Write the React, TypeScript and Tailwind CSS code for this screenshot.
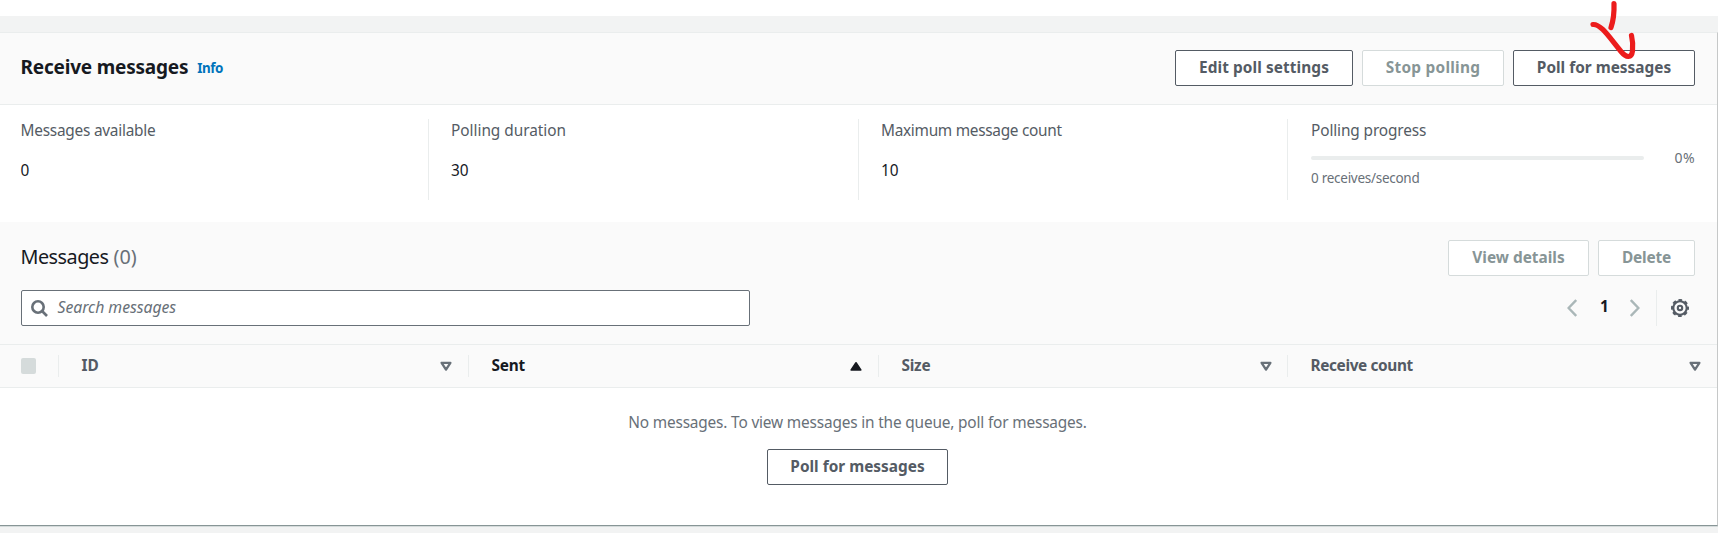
import type { ReactNode } from 'react';

function Button({ children, disabled = false, className = '' }: { children: ReactNode; disabled?: boolean; className?: string }) {
  return (
    <button
      className={`flex h-9 shrink-0 items-center justify-center whitespace-nowrap rounded-[2px] border bg-white pb-px text-[15.4px] font-bold ${
        disabled ? 'border-[#d5dbdb] text-[#879596]' : 'border-[#545b64] text-[#545b64]'
      } ${className}`}
    >
      {children}
    </button>
  );
}

function Stat({ label, value, tracking, className = '' }: { label: string; value: string; tracking: string; className?: string }) {
  return (
    <div className={`h-[81px] shrink-0 border-r border-[#eaeded] ${className}`}>
      <div className={`h-[23px] leading-[23px] text-[#545b64] ${tracking}`}>{label}</div>
      <div className="mt-[17px] h-[23px] leading-[23px] text-[#16191f]">{value}</div>
    </div>
  );
}

function SortDown() {
  return (
    <svg width="12" height="11" viewBox="0 0 12 11" fill="none" stroke="#687078" strokeWidth="2.3" strokeLinejoin="round">
      <path d="M1.6 1.8h8.8L6 8.6z" />
    </svg>
  );
}

function SortUp() {
  return (
    <svg width="12" height="11" viewBox="0 0 12 11" fill="#16191f" stroke="#16191f" strokeWidth="1.6" strokeLinejoin="round">
      <path d="M1.2 9h9.6L6 1.8z" />
    </svg>
  );
}

function HeaderCell({ label, icon, className = '' }: { label: string; icon: ReactNode; className?: string }) {
  return (
    <div className={`flex h-[22px] shrink-0 items-center justify-between border-l border-[#eaeded] pl-[22.5px] font-bold ${className}`}>
      <span className="pb-px">{label}</span>
      {icon}
    </div>
  );
}

function Gear() {
  return (
    <svg width="18" height="18" viewBox="0 0 18 18" fill="none" stroke="#545b64">
      <circle cx="9" cy="9" r="6.7" strokeWidth="2.1" />
      <circle cx="9" cy="9" r="8" strokeWidth="2" strokeDasharray="3.6 2.683" strokeDashoffset="1.8" />
      <circle cx="9" cy="9" r="2.2" strokeWidth="2.1" />
    </svg>
  );
}

export default function App() {
  return (
    <div className="relative h-[533px] w-[1718px] overflow-hidden bg-[#f2f3f3] pt-4 font-['Noto_Sans',sans-serif] text-[15.4px] before:absolute before:inset-x-0 before:top-0 before:h-4 before:bg-white">
      <section className="mt-4 flex h-[494px] flex-col border-r border-b border-t border-r-[#c6c8c8] border-b-[#879596] border-t-[#eaeded] bg-white shadow-[0_1px_0_#d5dbdb]">
        <header className="flex h-[72px] shrink-0 items-center border-b border-[#eaeded] bg-[#fafafa] pr-[22px] pl-[20.5px]">
          <h2 className="pb-[2px] text-[19px] font-bold tracking-[-0.2px] text-[#16191f]">Receive messages</h2>
          <a className="ml-[9px] text-[13.4px] font-bold tracking-[-0.5px] text-[#0073bb]">Info</a>
          <div className="ml-auto flex gap-[9px] pb-px">
            <Button className="w-[178px] tracking-[0.08px]">Edit poll settings</Button>
            <Button disabled className="w-[142px] tracking-[0.26px]">Stop polling</Button>
            <Button className="w-[182px]">Poll for messages</Button>
          </div>
        </header>

        <div className="flex h-[117px] shrink-0 pt-[14px]">
          <Stat label="Messages available" value="0" tracking="tracking-[-0.24px]" className="w-[429px] pl-[20.5px]" />
          <Stat label="Polling duration" value="30" tracking="tracking-[-0.03px]" className="w-[430px] pl-[22px]" />
          <Stat label="Maximum message count" value="10" tracking="tracking-[-0.29px]" className="w-[429px] pl-[22px]" />
          <div className="grow pr-[22px] pl-[23px]">
            <div className="h-[23px] leading-[23px] tracking-[-0.12px] text-[#545b64]">Polling progress</div>
            <div className="mt-[6px] flex h-5 items-center justify-between text-[#687078]">
              <div className="h-1 w-[333px] rounded-full bg-[#eaeded]" />
              <span className="pb-[2px] text-[14px] tracking-[0.4px]">0%</span>
            </div>
            <div className="h-5 text-[13.5px] leading-5 tracking-[-0.27px] text-[#687078]">0 receives/second</div>
          </div>
        </div>

        <div className="flex h-[122px] shrink-0 flex-col bg-[#fafafa] pt-[18px] pr-[22px] pl-[21px]">
          <div className="flex h-9 items-center justify-between">
            <h3 className="-ml-[0.5px] pb-[2px] text-[19.8px] text-[#16191f]">
              <span className="tracking-[-0.5px]">Messages</span> <span className="text-[#687078]">(0)</span>
            </h3>
            <div className="flex gap-[9px]">
              <Button disabled className="w-[141px]">View details</Button>
              <Button disabled className="w-[97px] tracking-[-0.15px]">Delete</Button>
            </div>
          </div>
          <div className="mt-[14px] flex h-9 items-center justify-between">
            <div className="flex h-9 w-[729px] items-center rounded-[2px] border border-[#687078] bg-white pl-[9px] text-[#687078]">
              <svg width="17" height="17" viewBox="0 0 17 17" fill="none" stroke="#687078" strokeWidth="2.6">
                <circle cx="7" cy="7" r="5.7" />
                <path d="M11 11l5 5" />
              </svg>
              <span className="ml-[9.5px] text-[15.8px] tracking-[-0.05px] italic">Search messages</span>
            </div>
            <div className="flex h-9 items-center pr-[6px]">
              <svg width="10" height="18" viewBox="0 0 10 18" fill="none" stroke="#aab7b8" strokeWidth="2.4">
                <path d="M9.2 1L1.6 9l7.6 8" />
              </svg>
              <span className="w-[53px] pb-[3px] pl-[2px] text-center font-bold text-[#16191f]">1</span>
              <svg width="10" height="18" viewBox="0 0 10 18" fill="none" stroke="#aab7b8" strokeWidth="2.4">
                <path d="M.8 1l7.6 8-7.6 8" />
              </svg>
              <div className="mr-[14px] ml-[16px] h-9 w-px bg-[#eaeded]" />
              <Gear />
            </div>
          </div>
        </div>

        <div className="flex h-[44px] shrink-0 items-center border-y border-[#eaeded] bg-[#fafafa] pl-[21px] text-[#545b64]">
          <div className="mr-[22px] h-4 w-[15px] rounded-[2px] bg-[#d5dbdb]" />
          <HeaderCell label="ID" icon={<SortDown />} className="w-[410px] pr-4" />
          <HeaderCell label="Sent" icon={<SortUp />} className="w-[410px] pr-4 tracking-[-0.25px] text-[#16191f]" />
          <HeaderCell label="Size" icon={<SortDown />} className="w-[409px] pr-[15px] tracking-[-0.25px]" />
          <HeaderCell label="Receive count" icon={<SortDown />} className="w-[430px] pr-4 tracking-[-0.37px]" />
        </div>

        <div className="flex flex-col items-center pr-[2px] pt-[23px]">
          <p className="h-6 leading-6 tracking-[-0.17px] text-[#687078]">No messages. To view messages in the queue, poll for messages.</p>
          <Button className="mt-[14px] w-[181px]">Poll for messages</Button>
        </div>
      </section>

      <svg className="absolute top-0 left-[1585px]" width="60" height="64" viewBox="0 0 60 64" fill="none" stroke="#ec1c1c" strokeWidth="5.2" strokeLinecap="round" strokeLinejoin="round">
        <path d="M29 3.500C29.3 12 28.2 21 26 27.500" />
        <path d="M8 24.500C16 24 24 37 36 51.500C41 57.500 46.500 59 47.500 51C47.900 46 47.600 40 46.500 35.500" />
      </svg>
    </div>
  );
}
